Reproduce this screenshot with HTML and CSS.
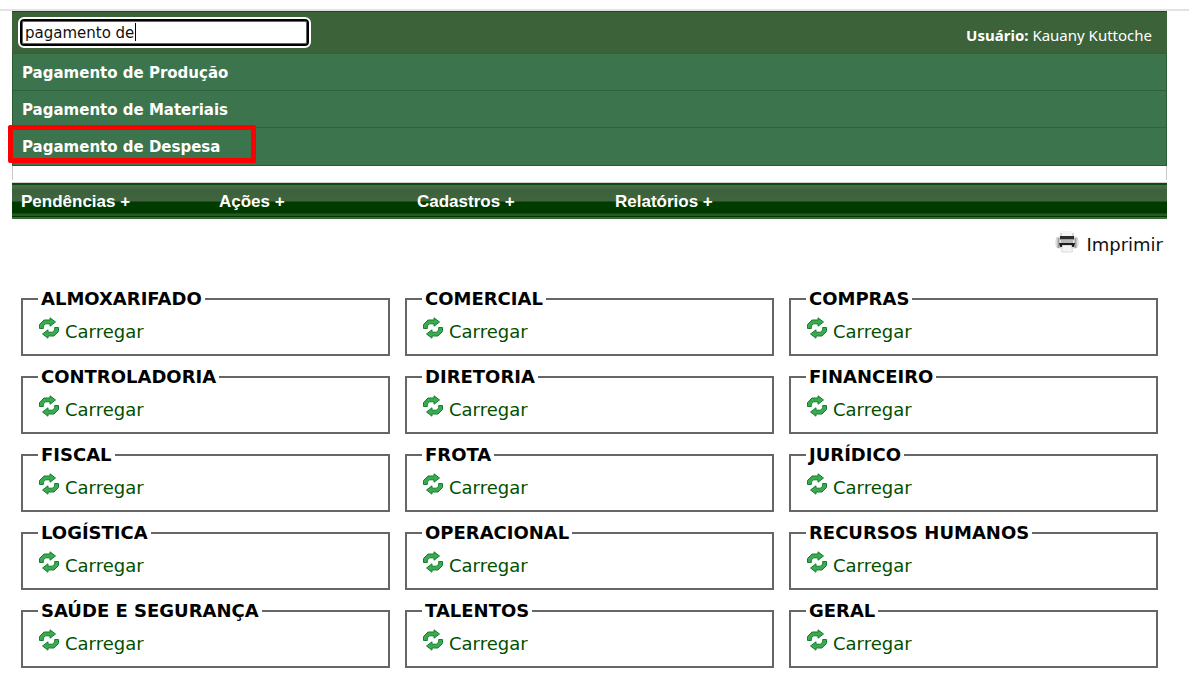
FILE: index.html
```
<!DOCTYPE html>
<html lang="pt-BR">
<head>
    <meta charset="UTF-8">
    <meta name="viewport" content="width=device-width, initial-scale=1.0">
    <title>Menu</title>
    <link rel="stylesheet" href="styles.css">
</head>
<body>
    <svg width="0" height="0" class="sprite" aria-hidden="true">
        <symbol id="reload" viewBox="0 0 20 22">
            <g fill="#3cab50" stroke="#108030" stroke-width="1">
                <path d="M.5 11.500V7.500L5 3H11V.8L16.500 5L11 9.200V6.800H6.500L4.300 9V11.500Z"/>
                <path d="M19.500 10.500V14.500L15 19H9V21.200L3.500 17L9 12.800V15.200H13.500L15.700 13V10.500Z"/>
            </g>
        </symbol>
    </svg>

    <div class="page">
        <header class="header">
            <div class="topbar">
                <div class="search-box">
                    <input type="text" class="search" id="search" aria-label="Pesquisar" value="pagamento de" autocomplete="off" spellcheck="false">
                    <span class="caret"></span>
                </div>
                <p class="user"><strong>Usuário:</strong> Kauany Kuttoche</p>
            </div>
            <ul class="results">
                <li><a href="#">Pagamento de Produção</a></li>
                <li><a href="#">Pagamento de Materiais</a></li>
                <li class="marked"><a href="#">Pagamento de Despesa</a></li>
            </ul>
        </header>

        <nav class="menu">
            <a href="#">Pendências +</a>
            <a href="#">Ações +</a>
            <a href="#">Cadastros +</a>
            <a href="#">Relatórios +</a>
        </nav>

        <div class="tools">
            <a href="#" class="print">
                <svg width="24" height="24" viewBox="0 0 24 24" aria-hidden="true">
                    <rect x="1" y="7" width="22" height="11" rx="3" fill="#e6e6e6" stroke="#d4d4d4"/>
                    <path d="M6 1H18V7H6Z" fill="#f6f6f6"/>
                    <path d="M6 3V8M18 3V8" stroke="#b4b4b4"/>
                    <path d="M3.500 8V18M20.500 8V18" stroke="#a0a0a0" stroke-width="2"/>
                    <path d="M5 6H19V9.500H5Z" fill="#2c2c2c"/>
                    <path d="M6 9.500H18V13H6Z" fill="#b8b8b8"/>
                    <path d="M4 13H20L19 17H5Z" fill="#1c1c1c"/>
                    <path d="M7.500 15.500H16.500L17.500 22H6.500Z" fill="#f4f4f4" stroke="#dcdcdc"/>
                </svg>
                <span>Imprimir</span>
            </a>
        </div>

        <main class="sectors">
            <fieldset><legend>ALMOXARIFADO</legend><a href="#"><svg><use href="#reload"/></svg>Carregar</a></fieldset>
            <fieldset><legend>COMERCIAL</legend><a href="#"><svg><use href="#reload"/></svg>Carregar</a></fieldset>
            <fieldset><legend>COMPRAS</legend><a href="#"><svg><use href="#reload"/></svg>Carregar</a></fieldset>
            <fieldset><legend>CONTROLADORIA</legend><a href="#"><svg><use href="#reload"/></svg>Carregar</a></fieldset>
            <fieldset><legend>DIRETORIA</legend><a href="#"><svg><use href="#reload"/></svg>Carregar</a></fieldset>
            <fieldset><legend>FINANCEIRO</legend><a href="#"><svg><use href="#reload"/></svg>Carregar</a></fieldset>
            <fieldset><legend>FISCAL</legend><a href="#"><svg><use href="#reload"/></svg>Carregar</a></fieldset>
            <fieldset><legend>FROTA</legend><a href="#"><svg><use href="#reload"/></svg>Carregar</a></fieldset>
            <fieldset><legend>JURÍDICO</legend><a href="#"><svg><use href="#reload"/></svg>Carregar</a></fieldset>
            <fieldset><legend>LOGÍSTICA</legend><a href="#"><svg><use href="#reload"/></svg>Carregar</a></fieldset>
            <fieldset><legend>OPERACIONAL</legend><a href="#"><svg><use href="#reload"/></svg>Carregar</a></fieldset>
            <fieldset><legend>RECURSOS HUMANOS</legend><a href="#"><svg><use href="#reload"/></svg>Carregar</a></fieldset>
            <fieldset><legend>SAÚDE E SEGURANÇA</legend><a href="#"><svg><use href="#reload"/></svg>Carregar</a></fieldset>
            <fieldset><legend>TALENTOS</legend><a href="#"><svg><use href="#reload"/></svg>Carregar</a></fieldset>
            <fieldset><legend>GERAL</legend><a href="#"><svg><use href="#reload"/></svg>Carregar</a></fieldset>
        </main>
    </div>
</body>
</html>
```
FILE: styles.css
```
*,
*::after {
    box-sizing: border-box;
}

body {
    margin: 9px 0 0;
    border-top: 2px solid #e2e2e2;
    background: #fff;
    color: #111;
    font-family: Verdana, "DejaVu Sans", sans-serif;
    font-size: 18px;
}

a {
    color: inherit;
    text-decoration: none;
}

.sprite {
    display: none;
}

.page {
    margin: 0 22px 0 12px;
}

/* header */
.header {
    padding-bottom: 14px;
    border: 1px solid #c8c8c8;
    border-width: 0 1px;
}

.topbar {
    display: flex;
    align-items: center;
    justify-content: space-between;
    height: 42px;
    margin: 0 -1px;
    padding: 0 15px 0 8px;
    background: #3b6239;
    border-top: 1px solid #14501c;
}

.search-box {
    display: flex;
    position: relative;
}

.search {
    width: 289px;
    height: 27px;
    padding: 0 3px;
    border: 2px solid #000;
    border-radius: 4px;
    outline: 2px solid #fff;
    box-shadow: inset 0 0 0 1px #666;
    background: #fff;
    color: #111;
    font-family: inherit;
    font-size: 15px;
}

.caret {
    position: absolute;
    top: 4px;
    left: 115px;
    width: 1px;
    height: 18px;
    background: #000;
}

.user {
    margin: 4px 0 0;
    color: #fff;
    font-family: "Noto Sans", sans-serif;
    font-size: 15px;
}

.results {
    margin: 0 -1px;
    padding: 0 0 1px;
    list-style: none;
    background: #3c744e;
    border: 1px solid #2b5a37;
    border-top: 0;
}

.results li {
    position: relative;
    border-top: 1px solid #2f6040;
}

.results a {
    display: block;
    padding: 2px 9px 0;
    color: #fff;
    font-size: 15px;
    font-weight: bold;
    line-height: 34px;
}

.marked::after {
    content: "";
    position: absolute;
    top: -3px;
    left: -5px;
    width: 248px;
    height: 38px;
    border: 5px solid #f00;
    border-radius: 2px;
}

/* menu */
.menu {
    display: flex;
    height: 37px;
    margin-top: 2px;
    background: linear-gradient(#d0d0d0 0 1px, #0a4a0a 1px 3px, #4b6b48 3px 5px, #3b623a 8px, #42643f 19px, #003c00 20px, #003a00 31px, #245c28 32px 34px, #003800 34px 35px, #3a6a3a 35px);
}

.menu a {
    width: 198px;
    padding-left: 9px;
    color: #fff;
    font-family: Arial, "Liberation Sans", sans-serif;
    font-size: 17px;
    font-weight: bold;
    line-height: 40px;
}

.tools {
    display: flex;
    justify-content: flex-end;
    padding: 11px 4px 0;
}

.print {
    display: flex;
    gap: 7px;
}

.print span {
    line-height: 30px;
}

/* sectors */
.sectors {
    display: grid;
    grid-template-columns: repeat(3, 1fr);
    gap: 10px 15px;
    padding: 28px 9px 0;
}

fieldset {
    min-width: 0;
    margin: 0;
    padding: 7px 15px;
    border: 2px solid #666;
}

legend {
    padding: 0 3px;
    color: #000;
    font-weight: bold;
    line-height: 22px;
}

fieldset a {
    display: flex;
    gap: 6px;
    color: #005000;
    line-height: 30px;
}

fieldset svg {
    width: 20px;
    height: 22px;
    margin-left: 1px;
}
```
